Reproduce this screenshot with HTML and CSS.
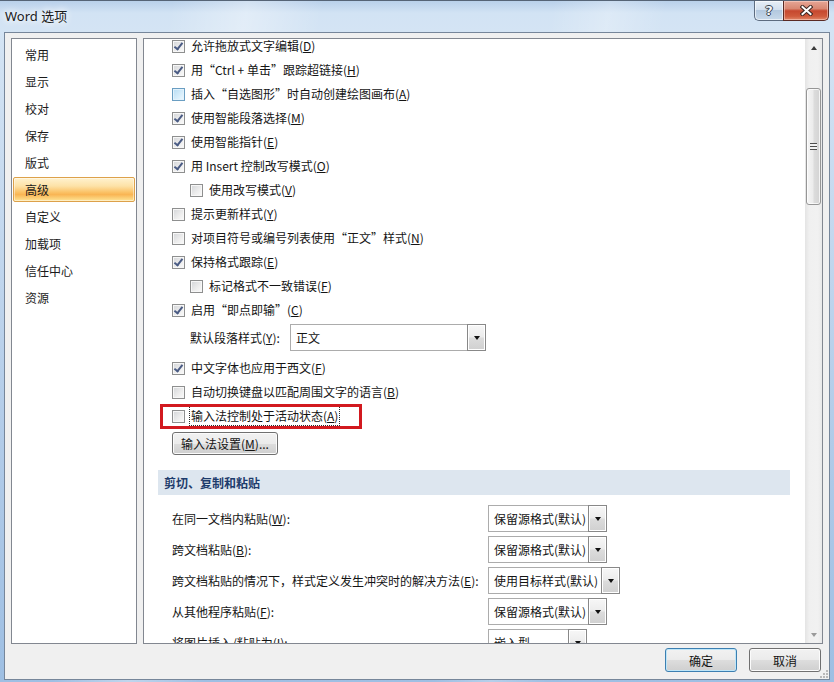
FILE: index.html
```html
<!DOCTYPE html>
<html lang="zh-CN">
<head>
<meta charset="utf-8">
<title>Word 选项</title>
<link rel="stylesheet" href="styles.css">
</head>
<body>
<div class="window">
  <div class="titlebar">
    <span class="title">Word 选项</span>
    <div class="caption-btns">
      <div class="cap-help"><span>?</span></div>
      <div class="cap-close">
        <svg width="13" height="11" viewBox="0 0 13 11">
          <path d="M2.5 2 L10.5 9 M10.5 2 L2.5 9" stroke="#3a2622" stroke-width="4" stroke-linecap="square" fill="none"/>
          <path d="M2.5 2 L10.5 9 M10.5 2 L2.5 9" stroke="#ffffff" stroke-width="2" stroke-linecap="square" fill="none"/>
        </svg>
      </div>
    </div>
  </div>
  <div class="client">
    <div class="main">
      <ul class="nav">
        <li>常用</li>
        <li>显示</li>
        <li>校对</li>
        <li>保存</li>
        <li>版式</li>
        <li class="sel">高级</li>
        <li>自定义</li>
        <li>加载项</li>
        <li>信任中心</li>
        <li>资源</li>
      </ul>
      <div class="panel">
        <div class="scroll">
          <div class="opts">
            <div class="opt"><span class="cb on"></span><span>允许拖放式文字编辑(<u>D</u>)</span></div>
            <div class="opt"><span class="cb on"></span><span>用“Ctrl + 单击”跟踪超链接(<u>H</u>)</span></div>
            <div class="opt"><span class="cb hover"></span><span>插入“自选图形”时自动创建绘图画布(<u>A</u>)</span></div>
            <div class="opt"><span class="cb on"></span><span>使用智能段落选择(<u>M</u>)</span></div>
            <div class="opt"><span class="cb on"></span><span>使用智能指针(<u>E</u>)</span></div>
            <div class="opt"><span class="cb on"></span><span>用 Insert 控制改写模式(<u>O</u>)</span></div>
            <div class="opt sub"><span class="cb"></span><span>使用改写模式(<u>V</u>)</span></div>
            <div class="opt"><span class="cb"></span><span>提示更新样式(<u>Y</u>)</span></div>
            <div class="opt"><span class="cb"></span><span>对项目符号或编号列表使用“正文”样式(<u>N</u>)</span></div>
            <div class="opt"><span class="cb on"></span><span>保持格式跟踪(<u>E</u>)</span></div>
            <div class="opt sub"><span class="cb"></span><span>标记格式不一致错误(<u>F</u>)</span></div>
            <div class="opt"><span class="cb on"></span><span>启用“即点即输”(<u>C</u>)</span></div>
            <div class="opt-combo">
              <span class="combo-label">默认段落样式(<u>Y</u>):</span>
              <div class="combo w196"><span class="val">正文</span><span class="dd"></span></div>
            </div>
            <div class="opt"><span class="cb on"></span><span>中文字体也应用于西文(<u>F</u>)</span></div>
            <div class="opt"><span class="cb"></span><span>自动切换键盘以匹配周围文字的语言(<u>B</u>)</span></div>
            <div class="opt marked"><span class="cb"></span><span class="focus">输入法控制处于活动状态(<u>A</u>)</span><span class="redbox"></span></div>
            <button class="btn ime">输入法设置(<u>M</u>)...</button>
            <div class="section">剪切、复制和粘贴</div>
            <div class="paste">
              <span class="plabel">在同一文档内粘贴(<u>W</u>):</span>
              <div class="combo w119"><span class="val">保留源格式(默认)</span><span class="dd"></span></div>
              <span class="plabel">跨文档粘贴(<u>B</u>):</span>
              <div class="combo w119"><span class="val">保留源格式(默认)</span><span class="dd"></span></div>
              <span class="plabel">跨文档粘贴的情况下，样式定义发生冲突时的解决方法(<u>E</u>):</span>
              <div class="combo w132"><span class="val">使用目标样式(默认)</span><span class="dd"></span></div>
              <span class="plabel">从其他程序粘贴(<u>F</u>):</span>
              <div class="combo w119"><span class="val">保留源格式(默认)</span><span class="dd"></span></div>
              <span class="plabel">将图片插入/粘贴为(<u>I</u>):</span>
              <div class="combo w99"><span class="val">嵌入型</span><span class="dd"></span></div>
            </div>
          </div>
        </div>
        <div class="vscroll">
          <div class="sb-btn"><span class="arrow-up"></span></div>
          <div class="track"><div class="thumb"><span class="grip"></span></div></div>
          <div class="sb-btn"><span class="arrow-down"></span></div>
        </div>
      </div>
    </div>
    <div class="footer">
      <button class="btn default">确定</button>
      <button class="btn">取消</button>
    </div>
    <svg class="sizegrip" width="10" height="10" viewBox="0 0 10 10">
      <rect x="7" y="1" width="2" height="2" fill="#b9b9b9"/>
      <rect x="4" y="4" width="2" height="2" fill="#b9b9b9"/>
      <rect x="7" y="4" width="2" height="2" fill="#b9b9b9"/>
      <rect x="1" y="7" width="2" height="2" fill="#b9b9b9"/>
      <rect x="4" y="7" width="2" height="2" fill="#b9b9b9"/>
      <rect x="7" y="7" width="2" height="2" fill="#b9b9b9"/>
    </svg>
  </div>
</div>
</body>
</html>
```

FILE: styles.css
```css
* { box-sizing: border-box; }
html, body { margin: 0; padding: 0; }
body {
  width: 834px;
  height: 682px;
  overflow: hidden;
  font-family: "Noto Sans CJK SC", "Noto Sans", sans-serif;
  font-size: 12px;
  color: #141414;
}

.window {
  width: 834px;
  height: 682px;
  display: flex;
  flex-direction: column;
  padding: 0 4px 2px 4px;
  border-top: 1px solid #566476;
  background:
    linear-gradient(100deg, rgba(255,255,255,0) 0%, rgba(255,255,255,0) 18%, rgba(255,255,255,.35) 26%, rgba(255,255,255,0) 34%, rgba(255,255,255,0) 58%, rgba(255,255,255,.25) 64%, rgba(255,255,255,0) 70%),
    linear-gradient(180deg, #b9d0ea 0, #d2e3f4 12px, #d4e4f4 31px, #b4cde9 60%, #9ebfe3 100%);
}

/* title bar */
.titlebar {
  height: 31px;
  display: flex;
  align-items: flex-start;
  padding-left: 1px;
}
.title {
  font-family: "Noto Sans", "Noto Sans CJK SC", sans-serif;
  font-size: 13px;
  line-height: 30px;
  color: #1a1a1a;
  text-shadow: 0 0 6px #ffffff, 0 0 10px #ffffff;
}
.caption-btns {
  margin-left: auto;
  display: flex;
  height: 20px;
  margin-right: 1px;
}
.cap-help {
  width: 29px;
  height: 20px;
  border: 1px solid #5d6c80;
  border-top: none;
  border-right: none;
  border-radius: 0 0 0 5px;
  background: linear-gradient(180deg, #e7eef6 0%, #d3e0ee 45%, #b3c8df 50%, #c8d9ea 100%);
  box-shadow: inset 0 0 0 1px rgba(255,255,255,.6);
  display: flex;
  align-items: center;
  justify-content: center;
}
.cap-help span {
  font-family: "DejaVu Sans", sans-serif;
  font-weight: bold;
  font-size: 13px;
  line-height: 13px;
  color: #f2f5f8;
  text-shadow: 1px 0 0 #37434f, -1px 0 0 #37434f, 0 1px 0 #37434f, 0 -1px 0 #37434f;
}
.cap-close {
  width: 46px;
  height: 20px;
  border: 1px solid #5a2a24;
  border-top: none;
  border-radius: 0 0 5px 0;
  background: linear-gradient(180deg, #e6a696 0%, #d98873 40%, #c6482f 52%, #cf5a3c 80%, #e0886a 100%);
  box-shadow: inset 0 0 0 1px rgba(255,220,210,.5);
  display: flex;
  align-items: center;
  justify-content: center;
}

/* client area */
.client {
  position: relative;
  flex: 1;
  border: 1px solid #76869a;
  background: #f0f0f0;
  padding: 5px 6px 0 6px;
  display: flex;
  flex-direction: column;
}
.main {
  height: 606px;
  display: flex;
  gap: 6px;
}

/* navigation */
.nav {
  width: 126px;
  margin: 0;
  padding: 2px 0 0 0;
  list-style: none;
  background: #fff;
  border: 1px solid #828790;
}
.nav li {
  height: 27px;
  line-height: 27px;
  padding-left: 13px;
  color: #1b1b1b;
}
.nav li.sel {
  height: 25px;
  line-height: 23px;
  margin: 1px 1px;
  padding-left: 11px;
  border: 1px solid #dda14a;
  border-radius: 2px;
  background: linear-gradient(180deg, #fff2cf 0%, #fde2a7 35%, #fbc266 62%, #f9b554 72%, #fcd47e 90%, #fee59a 100%);
  box-shadow: inset 0 0 0 1px rgba(255,255,255,.45);
}

/* option panel */
.panel {
  width: 680px;
  display: flex;
  background: #fff;
  border: 1px solid #828790;
}
.scroll {
  flex: 1;
  overflow: hidden;
}
.opts {
  margin-top: -5px;
  display: flex;
  flex-direction: column;
  align-items: flex-start;
}
.opt {
  height: 24px;
  display: flex;
  align-items: center;
  gap: 6px;
  padding-left: 28px;
  white-space: nowrap;
  line-height: 16px;
}
.opt.sub { padding-left: 46px; }
.opt.marked { position: relative; }

.cb {
  position: relative;
  flex: none;
  width: 13px;
  height: 13px;
  border: 1px solid #8e8f8f;
  background: linear-gradient(135deg, #d3d5d8 0%, #eeeeee 60%, #fbfbfb 100%);
  box-shadow: inset 0 0 0 1px #f7f7f7;
}
.cb.hover {
  border-color: #6a9ec2;
  background: linear-gradient(135deg, #b7dcf3 0%, #d8eefb 60%, #eef8fe 100%);
  box-shadow: inset 0 0 0 1px #e2f2fc;
}
.cb.on::after {
  content: "";
  position: absolute;
  left: 3px;
  top: 0px;
  width: 3px;
  height: 7px;
  border: solid #4a5b84;
  border-width: 0 2px 2px 0;
  transform: rotate(38deg);
}

.focus {
  border: 1px dotted #2a2a2a;
  padding: 1px 1px;
  margin-left: -2px;
  line-height: 16px;
}
.redbox {
  position: absolute;
  left: 16px;
  top: 0;
  width: 202px;
  height: 25px;
  border: 3px solid #d2191f;
}

.opt-combo {
  display: flex;
  align-items: center;
  padding: 2px 0 5px 46px;
  white-space: nowrap;
}
.combo-label { width: 100px; flex: none; }

.combo {
  display: flex;
  height: 27px;
  border: 1px solid #acacac;
  background: #fff;
}
.combo .val {
  flex: 1;
  padding-left: 5px;
  line-height: 25px;
  white-space: nowrap;
  overflow: hidden;
}
.combo .dd {
  flex: none;
  width: 19px;
  margin: -1px -1px -1px 0;
  border: 1px solid #888888;
  background: linear-gradient(180deg, #f7f7f7 0%, #ececec 48%, #dcdcdc 52%, #d0d0d0 100%);
  box-shadow: inset 0 0 0 1px #ffffff;
  display: flex;
  align-items: center;
  justify-content: center;
}
.combo .dd::before {
  content: "";
  border-left: 3.5px solid transparent;
  border-right: 3.5px solid transparent;
  border-top: 4px solid #111;
}
.w196 { width: 196px; }
.w119 { width: 119px; }
.w132 { width: 132px; }
.w99 { width: 99px; }

.btn {
  font-family: inherit;
  font-size: 12px;
  color: #141414;
  height: 24px;
  padding: 0;
  border: 1px solid #707070;
  border-radius: 3px;
  background: linear-gradient(180deg, #f2f2f2 0%, #ebebeb 50%, #dddddd 51%, #cfcfcf 100%);
  box-shadow: inset 0 0 0 1px #fbfbfb;
}
.btn.ime {
  width: 106px;
  height: 23px;
  margin: 4px 0 0 28px;
}
.btn.default {
  border-color: #3c7fb1;
  box-shadow: inset 0 0 0 1px #bfe6f8;
}

.section {
  align-self: stretch;
  margin: 15px 15px 0 14px;
  height: 25px;
  line-height: 25px;
  padding-left: 6px;
  background: #dde6ef;
  color: #1e3c6c;
  font-weight: bold;
}

.paste {
  margin: 10px 0 0 28px;
  display: grid;
  grid-template-columns: 316px auto;
  row-gap: 4px;
  align-items: center;
  white-space: nowrap;
}

/* scrollbar */
.vscroll {
  width: 17px;
  flex: none;
  display: flex;
  flex-direction: column;
  background: linear-gradient(90deg, #e4e4e4 0%, #f0f0f0 25%, #f1f1f1 75%, #e9e9e9 100%);
}
.sb-btn {
  height: 17px;
  flex: none;
  display: flex;
  align-items: center;
  justify-content: center;
}
.arrow-up {
  border-left: 3.5px solid transparent;
  border-right: 3.5px solid transparent;
  border-bottom: 4px solid #3a3a3a;
}
.arrow-down {
  border-left: 3.5px solid transparent;
  border-right: 3.5px solid transparent;
  border-top: 4px solid #9a9a9a;
}
.track {
  flex: 1;
  padding: 32px 1px 0 1px;
}
.thumb {
  height: 117px;
  border: 1px solid #969696;
  border-radius: 3px;
  background: linear-gradient(90deg, #f5f5f5 0%, #ececec 45%, #dcdcdc 55%, #d3d3d3 100%);
  box-shadow: inset 0 0 0 1px rgba(255,255,255,.75);
  display: flex;
  align-items: center;
  justify-content: center;
}
.grip {
  width: 7px;
  height: 7px;
  background: repeating-linear-gradient(180deg, #4e4e4e 0, #4e4e4e 1px, #f2f2f2 1px, #f2f2f2 3px);
}

/* footer */
.footer {
  margin-top: 4px;
  display: flex;
  justify-content: flex-end;
  gap: 12px;
  padding-right: 2px;
}
.footer .btn { width: 72px; }

.sizegrip {
  position: absolute;
  right: 0;
  bottom: 0;
}
```
